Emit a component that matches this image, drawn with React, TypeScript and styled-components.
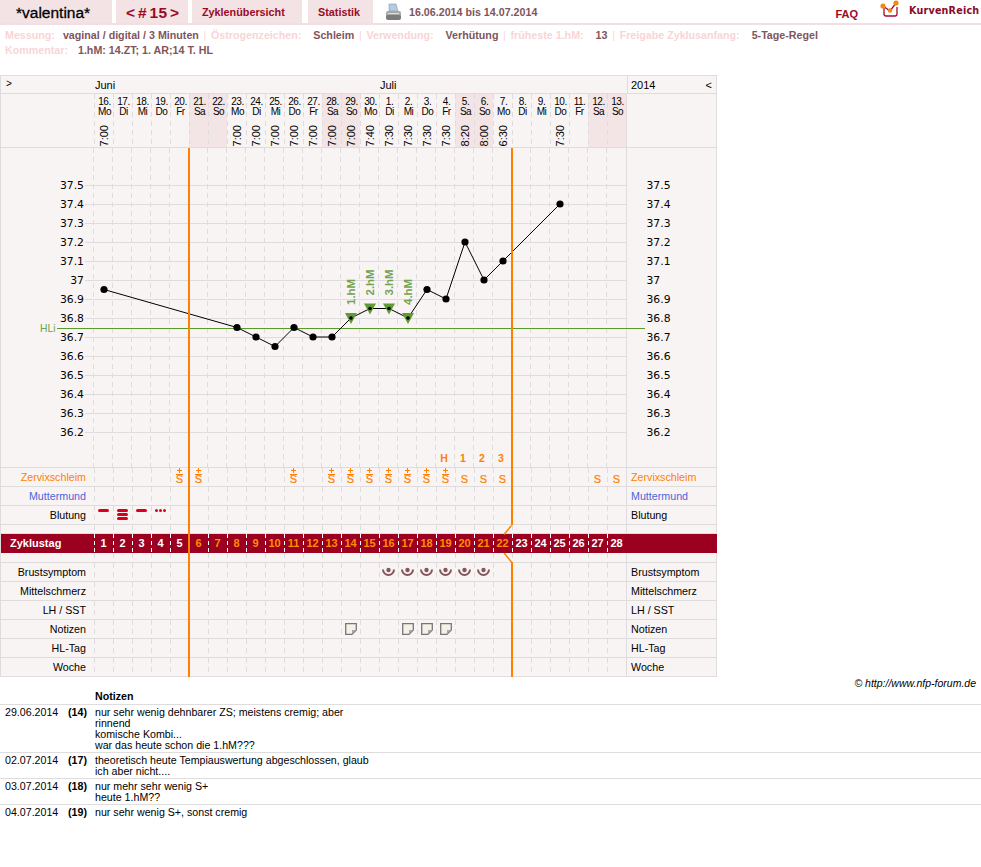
import React from 'react'
import styled, { createGlobalStyle } from 'styled-components'

const DAY_W = 19
const LABEL_W = 94
const CHART_H = 320
const CHART_TOP = 148

const Global = createGlobalStyle`
  html, body { margin: 0; padding: 0; background: #fff; }
  body { font-family: "Liberation Sans", Arial, sans-serif; font-size: 11px; color: #000; }
`

const Header = styled.header`
  display: flex;
  height: 23px;
  border-bottom: 2px solid #f3dfe1;
`

const Tab = styled.a<{ $w: number; $gap: number }>`
  width: ${p => p.$w}px;
  margin-right: ${p => p.$gap}px;
  padding-left: 10px;
  box-sizing: border-box;
  background: #f3e3e5;
  color: #9b0a24;
  font-weight: bold;
  font-size: 10.8px;
  line-height: 24px;
`

const Title = styled(Tab)`
  color: #000;
  font-size: 15.5px;
  font-weight: normal;
  -webkit-text-stroke: 0.3px #000;
  line-height: 25px;
  padding-left: 16px;
`

const CycleNav = styled(Tab)`
  font-size: 15.5px;
  line-height: 25px;
  word-spacing: -2px;
  letter-spacing: 0.3px;
`

const PrintIcon = styled.svg`
  margin: 3px 0 0 13px;
  width: 15px;
  height: 18px;
  flex: none;
`

const Period = styled.span`
  margin-left: 8px;
  color: #80555b;
  font-weight: bold;
  font-size: 10.7px;
  line-height: 25px;
  white-space: nowrap;
`

const Spacer = styled.div`
  flex: 1;
`

const Faq = styled.a`
  color: #9b0a24;
  font-weight: bold;
  font-size: 11px;
  line-height: 28px;
  margin-right: 22px;
`

const Logo = styled.div`
  display: flex;
  align-items: flex-start;
  gap: 9px;
  width: 101px;
  color: #8a0a2a;
  font-family: "DejaVu Sans", sans-serif;
  font-weight: bold;
  font-size: 9.6px;
  line-height: 22px;
  letter-spacing: 0.2px;
  white-space: nowrap;
`

const Meta = styled.div`
  padding: 3px 0 0 5px;
  height: 49px;
  box-sizing: border-box;
  font-weight: bold;
  font-size: 10.7px;
  line-height: 15px;
  white-space: nowrap;
`

const MetaKey = styled.span<{ $g?: number }>`
  color: #f8d5d7;
  margin-right: ${p => p.$g ?? 12}px;
`

const MetaVal = styled.span`
  color: #80555b;
`

const MetaSep = styled.span`
  color: #f8d5d7;
  font-weight: normal;
  margin: 0 4.7px;
`

const Calendar = styled.div`
  width: 717px;
  box-sizing: border-box;
  margin-top: 1px;
  border: 1px solid #dedcdc;
  border-width: 1px 0 0 1px;
  background: #f9f4f4;
  position: relative;
`

const Row = styled.div<{ $h: number }>`
  display: grid;
  grid-template-columns: ${LABEL_W - 1}px repeat(28, ${DAY_W}px) 90px;
  height: ${p => p.$h}px;
  box-sizing: border-box;
  border-bottom: 1px solid #dedcdc;
  border-right: 1px solid #dedcdc;
`

const Label = styled.div<{ $c?: string }>`
  text-align: right;
  padding-right: 8px;
  line-height: 18px;
  font-size: 10.7px;
  color: ${p => p.$c || '#000'};
`

const RightLabel = styled.div<{ $c?: string }>`
  padding-left: 4px;
  line-height: 18px;
  font-size: 10.7px;
  border-left: 1px solid #dedcdc;
  color: ${p => p.$c || '#000'};
`

const Cell = styled.div`
  position: relative;
  display: flex;
  flex-direction: column;
  align-items: center;
  justify-content: center;
  min-width: 0;
  background-image: repeating-linear-gradient(#dedcdc 0 5px, transparent 5px 9px);
  background-size: 1px 100%;
  background-repeat: no-repeat;
  background-position: left top;
`

const MonthRow = styled(Row)`
  display: flex;
  line-height: 19px;
  font-size: 11px;
`

const Toggle = styled.div`
  width: ${LABEL_W}px;
  padding-left: 5px;
  box-sizing: border-box;
  font-size: 10px;
  line-height: 15px;
`

const Month = styled.div<{ $w: number }>`
  width: ${p => p.$w}px;
  flex: none;
`

const YearCell = styled.div`
  flex: 1;
  display: flex;
  justify-content: space-between;
  padding: 0 4px 0 3px;
  border-left: 1px solid #dedcdc;
`

const DateCell = styled(Cell)<{ $we: boolean }>`
  justify-content: flex-start;
  background-color: ${p => (p.$we ? '#f3e4e6' : 'transparent')};
  padding: 3px 0 0 2px;
  box-sizing: border-box;
  font-size: 10px;
  line-height: 10px;
  letter-spacing: -0.5px;
  text-align: center;
`

const DateText = styled.div`
  white-space: nowrap;
`

const TimeText = styled.div`
  position: absolute;
  bottom: 1px;
  left: 4px;
  writing-mode: vertical-rl;
  transform: rotate(180deg);
  font-size: 11px;
  line-height: 12px;
  letter-spacing: 0;
`

const ChartBox = styled.svg`
  display: block;
  width: 716px;
  height: ${CHART_H}px;
`

const Mucus = styled.div`
  position: relative;
  margin-top: 3px;
  color: #ff8000;
  text-align: center;
  -webkit-text-stroke: 0.2px #ff8000;
`

const MucusS = styled.div<{ $bar?: boolean }>`
  padding-top: ${p => (p.$bar ? 1 : 2)}px;
  line-height: 7px;
  font-size: 11px;
  border-top: ${p => (p.$bar ? '1px solid #ff8000' : 'none')};
`

// small plus above the S, a mark of the chart rather than running text
const MucusPlus = styled.div`
  position: absolute;
  top: -6px;
  left: 50%;
  width: 5px;
  height: 5px;
  margin-left: -2.5px;
  background:
    linear-gradient(#ff8000, #ff8000) center / 5px 1px no-repeat,
    linear-gradient(#ff8000, #ff8000) center / 1px 5px no-repeat;
`

const ZRow = styled(Row)`
  background: #9c0020;
  border-bottom: none;
  border-right: none;
  color: #fff;
  font-weight: bold;
`

const ZLabel = styled.div`
  padding-left: 9px;
  line-height: 19px;
  font-size: 11px;
`

const ZCell = styled.div<{ $fert: boolean }>`
  position: relative;
  text-align: center;
  line-height: 18px;
  font-size: 11px;
  color: ${p => (p.$fert ? '#ff8c00' : '#fff')};
  background-image: repeating-linear-gradient(#fff 0 4px, transparent 4px 7px);
  background-size: 1px 100%;
  background-repeat: no-repeat;
`

const BleedBar = styled.div<{ $w: number }>`
  width: ${p => p.$w}px;
  height: 3px;
  border-radius: 2px;
  background: #d8001c;
  margin-bottom: 1px;
`

const BleedGroup = styled.div`
  position: absolute;
  top: 3px;
  left: 0;
  right: 0;
  display: flex;
  flex-direction: column;
  align-items: center;
`

const Spots = styled.div`
  display: flex;
  gap: 1px;
`

const Spot = styled.div`
  width: 3px;
  height: 3px;
  border-radius: 50%;
  background: #d8001c;
`

const OrangeLines = styled.div`
  position: absolute;
  left: 0;
  top: 0;
  bottom: 0;
  width: 100%;
  pointer-events: none;
`

const OrangeLine = styled.div<{ $x: number; $top: number; $h: number }>`
  position: absolute;
  left: ${p => p.$x}px;
  top: ${p => p.$top}px;
  height: ${p => p.$h}px;
  width: 2px;
  background: #ff8000;
`

const Slash = styled.svg<{ $x: number; $top: number }>`
  position: absolute;
  left: ${p => p.$x}px;
  top: ${p => p.$top}px;
`

const Copy = styled.div`
  width: 976px;
  margin-top: -1px;
  text-align: right;
  font-style: italic;
  font-size: 10.5px;
  line-height: 14px;
`

const Notes = styled.div`
  display: grid;
  grid-template-columns: 64px 31px 1fr;
  width: 100%;
  margin-top: 1px;
  font-size: 10.65px;
  line-height: 11px;
`

const NotesHead = styled.div`
  grid-column: 3;
  font-weight: bold;
  line-height: 11px;
  height: 13px;
`

const NoteDate = styled.div`
  border-top: 1px solid #dedcdc;
  padding: 2px 0 1px 5px;
  line-height: 11px;
`

const NoteIdx = styled(NoteDate)`
  padding-left: 4px;
  font-weight: bold;
`

const NoteText = styled(NoteDate)`
  padding-left: 0;
`

const NoteInner = styled.div`
  width: 280px;
`

const months = [
  { n: 'Juni', w: 285 },
  { n: 'Juli', w: 247 },
]

const dates = ['16.|Mo', '17.|Di', '18.|Mi', '19.|Do', '20.|Fr', '21.|Sa', '22.|So', '23.|Mo', '24.|Di', '25.|Mi', '26.|Do', '27.|Fr', '28.|Sa', '29.|So', '30.|Mo', '1.|Di', '2.|Mi', '3.|Do', '4.|Fr', '5.|Sa', '6.|So', '7.|Mo', '8.|Di', '9.|Mi', '10.|Do', '11.|Fr', '12.|Sa', '13.|So']

const times: Record<number, string> = {
  0: '7:00', 7: '7:00', 8: '7:00', 9: '7:00', 10: '7:00', 11: '7:00', 12: '7:00', 13: '7:00', 14: '7:40', 15: '7:30', 16: '7:30', 17: '7:30', 18: '7:30', 19: '8:20', 20: '8:00', 21: '6:30', 24: '7:30',
}

const temps: [number, number][] = [
  [0, 36.95], [7, 36.75], [8, 36.7], [9, 36.65], [10, 36.75], [11, 36.7], [12, 36.7], [13, 36.8], [14, 36.85], [15, 36.85], [16, 36.8], [17, 36.95], [18, 36.9], [19, 37.2], [20, 37.0], [21, 37.1], [24, 37.4],
]

const ticks = ['37.5', '37.4', '37.3', '37.2', '37.1', '37', '36.9', '36.8', '36.7', '36.6', '36.5', '36.4', '36.3', '36.2']
const hm: [number, string][] = [[13, '1.hM'], [14, '2.hM'], [15, '3.hM'], [16, '4.hM']]
const peak: [number, string][] = [[18, 'H'], [19, '1'], [20, '2'], [21, '3']]

// coordinates inside the chart svg, the calendar starts at x=1
const dx = (i: number) => LABEL_W - 1 + DAY_W * i + 10
const ty = (t: number) => 185 + (37.5 - t) * 190 - CHART_TOP

const isWeekend = (i: number) => /Sa|So/.test(dates[i])
const days = dates.map((_, i) => i)

const plus = [4, 5, 10, 12, 13, 14, 15, 16, 17, 18]
const plain = [19, 20, 21, 26, 27]

const Chart = () => (
  <ChartBox viewBox={`0 0 716 ${CHART_H}`}>
    {days.map(i => (
      <line key={i} x1={dx(i) - 10.5} x2={dx(i) - 10.5} y1={0} y2={CHART_H} stroke="#dedcdc" strokeDasharray="5 4" />
    ))}
    <line x1={625.5} x2={625.5} y1={0} y2={CHART_H} stroke="#dedcdc" />
    <line x1={0} x2={716} y1={319.5} y2={319.5} stroke="#dedcdc" />
    <line x1={715.5} x2={715.5} y1={0} y2={CHART_H} stroke="#dedcdc" />
    {ticks.map((t, i) => {
      const y = 37.5 + i * 19
      return (
        <g key={t}>
          <line x1={84} x2={626} y1={y} y2={y} stroke="#dedcdc" />
          <text x={83} y={y + 3.5} textAnchor="end" fontFamily="DejaVu Sans" fontSize="10.8">{t}</text>
          <text x={645.5} y={y + 3.5} fontFamily="DejaVu Sans" fontSize="10.8">{t}</text>
        </g>
      )
    })}
    <text x={39} y={184} fontSize="10.3" fontFamily="Liberation Sans" fill="#6fa34a">HLi</text>
    <line x1={56} x2={644} y1={180.5} y2={180.5} stroke="#5a9a2a" />
    <polyline points={temps.map(([i, t]) => `${dx(i)},${ty(t)}`).join(' ')} fill="none" stroke="#000" />
    {hm.map(([i, l]) => {
      const t = temps.find(p => p[0] === i)!
      const x = dx(i)
      const y = ty(t[1])
      return (
        <g key={l}>
          <polygon points={`${x - 6},${y - 5} ${x + 6},${y - 5} ${x},${y + 6}`} fill="#5f9a35" />
          <text transform={`translate(${x + 4},${y - 13}) rotate(-90)`} fontFamily="Liberation Sans" fontWeight="bold" fontSize="11.5" fill="#74a350">{l}</text>
        </g>
      )
    })}
    {temps.map(([i, t]) => (
      <circle key={i} cx={dx(i)} cy={ty(t)} r={hm.some(h => h[0] === i) ? 1.8 : 3.6} fill="#000" />
    ))}
    {peak.map(([i, l]) => (
      <text key={l} x={dx(i) - 2} y={314} textAnchor="middle" fontFamily="Liberation Sans" fontWeight="bold" fontSize="10.5" fill="#ff8000">{l}</text>
    ))}
  </ChartBox>
)

const Blank = ({ h }: { h: number }) => (
  <Row $h={h}>
    <div />
    {days.map(i => <Cell key={i} />)}
    <RightLabel />
  </Row>
)

const LabelRow = ({ name, color, cell }: { name: string; color?: string; cell?: (i: number) => React.ReactNode }) => (
  <Row $h={19}>
    <Label $c={color}>{name}</Label>
    {days.map(i => <Cell key={i}>{cell && cell(i)}</Cell>)}
    <RightLabel $c={color}>{name}</RightLabel>
  </Row>
)

const mucusCell = (i: number) => {
  if (plus.includes(i)) {
    return (
      <Mucus>
        <MucusPlus />
        <MucusS $bar>S</MucusS>
      </Mucus>
    )
  }
  if (plain.includes(i)) {
    return <Mucus><MucusS>S</MucusS></Mucus>
  }
  return null
}

const bleedCell = (i: number) => {
  if (i === 0 || i === 2) return <BleedGroup><BleedBar $w={11} /></BleedGroup>
  if (i === 1) return <BleedGroup><BleedBar $w={11} /><BleedBar $w={11} /><BleedBar $w={11} /></BleedGroup>
  if (i === 3) return <BleedGroup><Spots><Spot /><Spot /><Spot /></Spots></BleedGroup>
  return null
}

const breastCell = (i: number) => (i >= 15 && i <= 20 ? (
  <svg width="15" height="11" viewBox="0 0 15 11">
    <path d="M2 2.5a5.5 5.5 0 0 0 11 0" fill="none" stroke="#85565b" strokeWidth="2" />
    <circle cx="7.5" cy="3" r="2.2" fill="#85565b" />
  </svg>
) : null)

const noteCell = (i: number) => ([13, 16, 17, 18].includes(i) ? (
  <svg width="12" height="12" viewBox="0 0 12 12">
    <path d="M.7.7h10.6v6.3l-4.3 4.3H.7z" fill="#f5f0e8" stroke="#777" strokeWidth="1.3" />
    <path d="M11 7H7v4z" fill="#a8a8a8" />
  </svg>
) : null)

const notes = [
  { d: '29.06.2014', n: '(14)', t: ['nur sehr wenig dehnbarer ZS; meistens cremig; aber rinnend', 'komische Kombi...', 'war das heute schon die 1.hM???'] },
  { d: '02.07.2014', n: '(17)', t: ['theoretisch heute Tempiauswertung abgeschlossen, glaub ich aber nicht....'] },
  { d: '03.07.2014', n: '(18)', t: ['nur mehr sehr wenig S+', 'heute 1.hM??'] },
  { d: '04.07.2014', n: '(19)', t: ['nur sehr wenig S+, sonst cremig'] },
]

export default function App() {
  return (
    <>
      <Global />
      <Header>
        <Title $w={112} $gap={4}>*valentina*</Title>
        <CycleNav $w={72} $gap={4}>&lt; # 15 &gt;</CycleNav>
        <Tab $w={110} $gap={6}>Zyklenübersicht</Tab>
        <Tab $w={65} $gap={0}>Statistik</Tab>
        <PrintIcon viewBox="0 0 15 18">
          <path d="M3 1h7l2 7H3z" fill="#b4cbe2" stroke="#8a9aaa" strokeWidth=".6" />
          <rect x="0" y="8" width="15" height="8" rx="2" fill="#a8a8a8" />
          <rect x="0" y="12" width="15" height="5" rx="2" fill="#7b7b7b" />
          <rect x="2" y="10" width="11" height="1" fill="#ddd" />
        </PrintIcon>
        <Period>16.06.2014 bis 14.07.2014</Period>
        <Spacer />
        <Faq>FAQ</Faq>
        <Logo>
          <svg width="20" height="18" viewBox="0 0 20 18">
            <path d="M4 7v7q0 2 2 2h9q2 0 2-2V7" fill="none" stroke="#a8083a" strokeWidth="1.3" />
            <path d="M3 6l7 5 6-8" fill="none" stroke="#a8083a" strokeWidth="1.3" />
            <circle cx="3" cy="6" r="2.6" fill="#f08a10" />
            <circle cx="10" cy="10.5" r="2.2" fill="#f08a10" />
            <circle cx="16" cy="3" r="2.6" fill="#f08a10" />
          </svg>
          KurvenReich
        </Logo>
      </Header>
      <Meta>
        <div>
          <MetaKey $g={8}>Messung:</MetaKey><MetaVal>vaginal / digital / 3 Minuten</MetaVal><MetaSep>|</MetaSep>
          <MetaKey>Östrogenzeichen:</MetaKey><MetaVal>Schleim</MetaVal><MetaSep>|</MetaSep>
          <MetaKey>Verwendung:</MetaKey><MetaVal>Verhütung</MetaVal><MetaSep>|</MetaSep>
          <MetaKey>früheste 1.hM:</MetaKey><MetaVal>13</MetaVal><MetaSep>|</MetaSep>
          <MetaKey>Freigabe Zyklusanfang:</MetaKey><MetaVal>5-Tage-Regel</MetaVal>
        </div>
        <div>
          <MetaKey $g={10}>Kommentar:</MetaKey><MetaVal>1.hM: 14.ZT; 1. AR;14 T. HL</MetaVal>
        </div>
      </Meta>
      <Calendar>
        <MonthRow $h={18}>
          <Toggle>&gt;</Toggle>
          {months.map(m => <Month key={m.n} $w={m.w}>{m.n}</Month>)}
          <YearCell><span>2014</span><span>&lt;</span></YearCell>
        </MonthRow>
        <Row $h={54}>
          <div />
          {days.map(i => {
            const [d, w] = dates[i].split('|')
            return (
              <DateCell key={i} $we={isWeekend(i)}>
                <DateText>{d}</DateText>
                <DateText>{w}</DateText>
                {times[i] && <TimeText>{times[i]}</TimeText>}
              </DateCell>
            )
          })}
          <RightLabel />
        </Row>
        <Chart />
        <LabelRow name="Zervixschleim" color="#ff8000" cell={mucusCell} />
        <LabelRow name="Muttermund" color="#4a66d8" />
        <LabelRow name="Blutung" cell={bleedCell} />
        <Blank h={9} />
        <ZRow $h={19}>
          <ZLabel>Zyklustag</ZLabel>
          {days.map(i => <ZCell key={i} $fert={i >= 5 && i <= 21}>{i + 1}</ZCell>)}
          <div />
        </ZRow>
        <Blank h={10} />
        <LabelRow name="Brustsymptom" cell={breastCell} />
        <LabelRow name="Mittelschmerz" />
        <LabelRow name="LH / SST" />
        <LabelRow name="Notizen" cell={noteCell} />
        <LabelRow name="HL-Tag" />
        <LabelRow name="Woche" />
        <OrangeLines>
          <OrangeLine $x={187} $top={72} $h={529} />
          <OrangeLine $x={510} $top={72} $h={377} />
          <OrangeLine $x={510} $top={486} $h={115} />
          <Slash $x={502} $top={449} width="10" height="10" viewBox="0 0 10 10">
            <path d="M1 9.5 8.5 .5" stroke="#ff8000" strokeWidth="1.5" />
          </Slash>
          <Slash $x={502} $top={477} width="10" height="10" viewBox="0 0 10 10">
            <path d="M1 0l7.5 9" stroke="#ff8000" strokeWidth="1.5" />
          </Slash>
        </OrangeLines>
      </Calendar>
      <Copy>© http://www.nfp-forum.de</Copy>
      <Notes>
        <NotesHead>Notizen</NotesHead>
        {notes.map(n => (
          <React.Fragment key={n.d}>
            <NoteDate>{n.d}</NoteDate>
            <NoteIdx>{n.n}</NoteIdx>
            <NoteText>
              <NoteInner>{n.t.map(l => <div key={l}>{l}</div>)}</NoteInner>
            </NoteText>
          </React.Fragment>
        ))}
      </Notes>
    </>
  )
}
